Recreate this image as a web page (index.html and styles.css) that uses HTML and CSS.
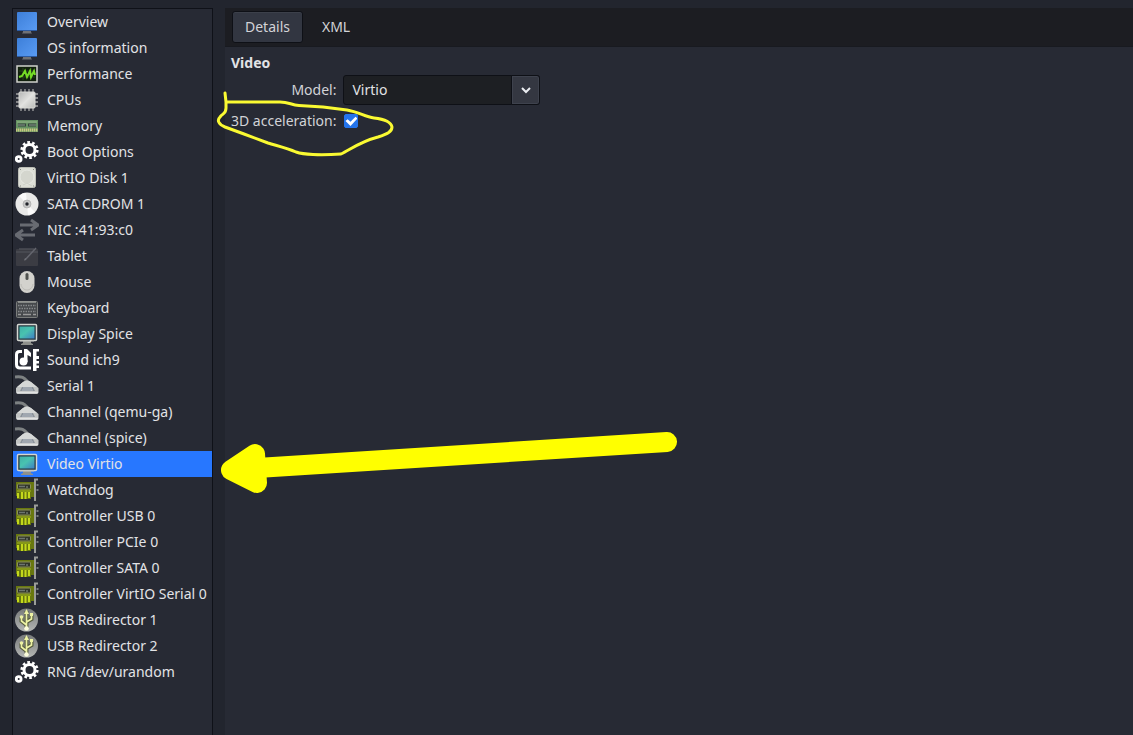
FILE: index.html
```html
<!DOCTYPE html>
<html lang="en">
<head>
    <meta charset="UTF-8">
    <meta name="viewport" content="width=device-width, initial-scale=1.0">
    <title>Virtual Machine Details</title>
    <link rel="stylesheet" href="styles.css">
</head>
<body>

    <!-- Hardware icons -->
    <svg class="sprite" aria-hidden="true">
        <defs>
            <linearGradient id="blue" x1="0" y1="0" x2="1" y2="1">
                <stop offset="0" stop-color="#3d7fd9"/>
                <stop offset="1" stop-color="#5a9cf4"/>
            </linearGradient>
            <linearGradient id="teal" x1="0" y1="0" x2="1" y2="1">
                <stop offset="0" stop-color="#3fb0a8"/>
                <stop offset="0.45" stop-color="#49c3b0"/>
                <stop offset="1" stop-color="#3f7fc4"/>
            </linearGradient>
            <linearGradient id="silver" x1="0" y1="0" x2="1" y2="1">
                <stop offset="0" stop-color="#b4b5b4"/>
                <stop offset="0.5" stop-color="#e2e2e0"/>
                <stop offset="1" stop-color="#b9bab8"/>
            </linearGradient>
            <linearGradient id="ball" x1="0" y1="0" x2="0" y2="1">
                <stop offset="0" stop-color="#777a7a"/>
                <stop offset="1" stop-color="#b4b6b4"/>
            </linearGradient>
        </defs>
        <symbol id="computer" viewBox="0 0 24 24">
            <path d="M8 20h8v2l1 1.500H7l1-1.500z" fill="#6f7176"/>
            <rect x="2" y="2" width="20" height="19" rx="1" fill="url(#blue)"/>
            <path d="M2 20.500h20" stroke="#2c5aa0"/>
        </symbol>
        <symbol id="performance" viewBox="0 0 24 24">
            <rect x="2" y="4" width="20" height="16" fill="#11200d" stroke="#d0d1cc" stroke-width="1.5"/>
            <path d="M4 9h16M4 15h16M8 6v12M16 6v12" stroke="#28451d" stroke-width="1"/>
            <path d="M4 15l3-1 3-5 2 6 3-6 1 6 3-6 1 4" fill="none" stroke="#75dc25" stroke-width="2"/>
        </symbol>
        <symbol id="cpu" viewBox="0 0 24 24">
            <path d="M6 1v22M10 1v22M14 1v22M18 1v22M1 6h22M1 10h22M1 14h22M1 18h22" stroke="#a2a3a2" stroke-width="1.3"/>
            <rect x="4" y="4" width="16" height="16" rx="1" fill="url(#silver)" stroke="#d8d8d5"/>
        </symbol>
        <symbol id="memory" viewBox="0 0 24 24">
            <rect x="1" y="6" width="22" height="12" fill="#669263"/>
            <path d="M2 8h20" stroke="#98b98d"/>
            <path d="M3 11h8M13 11h8" stroke="#34443d" stroke-width="3"/>
            <path d="M3 11h7M14 11h7" stroke="#8a9b8d" stroke-width="1"/>
            <path d="M1 16h22" stroke="#c7c780" stroke-width="3" stroke-dasharray="1.4 .6"/>
        </symbol>
        <symbol id="gears" viewBox="0 0 24 24">
            <circle cx="14.500" cy="10" r="5.500" fill="none" stroke="#fff" stroke-width="3"/>
            <circle cx="14.500" cy="10" r="7.600" fill="none" stroke="#fff" stroke-width="3" stroke-dasharray="2.600 2.175"/>
            <circle cx="3.700" cy="19" r="2.400" fill="none" stroke="#fff" stroke-width="2.800"/>
        </symbol>
        <symbol id="disk" viewBox="0 0 24 24">
            <rect x="3.500" y="1.500" width="17" height="20" rx="2" fill="#dcded6" stroke="#bcbeb6"/>
            <circle cx="12" cy="11" r="7" fill="#d4d6ce" stroke="#e6e8e2"/>
            <path d="M8 19l4-2 5 3" fill="none" stroke="#cdd0c7"/>
            <path d="M5 3.500h1M18 3.500h1M5 20h1M18 20h1" stroke="#888b84"/>
        </symbol>
        <symbol id="cdrom" viewBox="0 0 24 24">
            <circle cx="12" cy="12" r="11.500" fill="#e9e9e8"/>
            <path d="M12 12L4 4a11 11 0 0 1 7-3zM12 12l8 8a11 11 0 0 1-7 3z" fill="#fafafa"/>
            <circle cx="12" cy="12" r="4" fill="#c6c7c7" stroke="#a2a3a3" stroke-width=".6"/>
            <circle cx="12" cy="12" r="1.700" fill="#202229"/>
        </symbol>
        <symbol id="nic" viewBox="0 0 24 24">
            <path d="M5 7h17M16 2l7 5-7 5M20 17H2M8 12l-7 5 7 5" fill="none" stroke="#686b72" stroke-width="3"/>
        </symbol>
        <symbol id="tablet" viewBox="0 0 24 24">
            <rect x="1" y="5" width="22" height="17" rx="1" fill="#3b3c43"/>
            <path d="M1 8h22M4 5h15" stroke="#4c4e56" stroke-width="1.500"/>
            <path d="M10 16L21 4" stroke="#64666e" stroke-width="1.500"/>
            <path d="M9 17l1-3 1 1z" fill="#77787e"/>
        </symbol>
        <symbol id="mouse" viewBox="0 0 24 24">
            <rect x="4.500" y="1" width="15" height="22" rx="7.500" fill="#d3d2cd"/>
            <path d="M6 14c1 8 11 8 12 0" fill="none" stroke="#bdbcb7"/>
            <rect x="10.500" y="3" width="3" height="7" rx="1.500" fill="#50524f"/>
        </symbol>
        <symbol id="keyboard" viewBox="0 0 24 24">
            <rect x="1.500" y="5.500" width="21" height="16" rx="1" fill="#46494c" stroke="#7b7d7c"/>
            <path d="M3 6h18" stroke="#9a9c99" stroke-width="1.500"/>
            <path d="M3 9.500h18M4 12.500h17M3 15.500h18" stroke="#85888a" stroke-width="1.500" stroke-dasharray="1.500 1"/>
            <path d="M3 18.500h3M8 18.500h8M18 18.500h3" stroke="#999" stroke-width="1.500"/>
        </symbol>
        <symbol id="display" viewBox="0 0 24 24">
            <path d="M8 19h8v2l2 1v1H6v-1l2-1z" fill="#8e908c"/>
            <rect x="2.500" y="2.500" width="19" height="16" rx="1" fill="#24373f" stroke="#d4d6d1" stroke-width="1.500"/>
            <rect x="4.500" y="4.500" width="15" height="12" fill="url(#teal)"/>
            <path d="M5 19h14" stroke="#b8bab5"/>
        </symbol>
        <symbol id="sound" viewBox="0 0 24 24">
            <path d="M7 3.500H4.500Q1.500 3.500 1.500 6.500v10q0 3.500 3.500 3.500H16" fill="none" stroke="#fff" stroke-width="3"/>
            <circle cx="8.500" cy="13.500" r="4" fill="#fff"/>
            <path d="M9 1h3l4 4v4l-3.500-2v7H9z" fill="#fff"/>
            <path d="M18 1h6v2.500h-2.500V23H18zM21 8h3v3h-3zM21 13h3v2.500h-3zM21 17.500h3v2.500h-3z" fill="#fff"/>
        </symbol>
        <symbol id="serial" viewBox="0 0 24 24">
            <path d="M0 3c8-1 9 1 14 6" fill="none" stroke="#7d8182" stroke-width="3"/>
            <path d="M8 8q4-3 8 0l7.500 6v4q0 2-3 2H4q-3 0-3-2v-4z" fill="#c2c4c3"/>
            <path d="M8 8q4-3 8 0l6 5H2z" fill="#d6d8d7"/>
            <path d="M7 13h11l2 4H5z" fill="#8b929b"/>
            <path d="M8 14h9M7 16h11" stroke="#b5bcc5" stroke-width="1"/>
            <path d="M2 18.500h21" stroke="#e0e2e2" stroke-width="1.500"/>
        </symbol>
        <symbol id="card" viewBox="0 0 24 24">
            <path d="M1 4h18v15h-3v2H2v-3H1z" fill="#68770f"/>
            <path d="M3 15v5M7 14v7M10.500 14v7M14 14v6" stroke="#c3d81c" stroke-width="2"/>
            <path d="M2 13h14" stroke="#90a31d" stroke-width="1.500"/>
            <rect x="2.500" y="6" width="13" height="5" rx="1" fill="#303529" stroke="#8b905c"/>
            <path d="M4 8.500h6M12 8v2" stroke="#6d756f" stroke-width="1.500"/>
            <path d="M23 1.500h-3V23" fill="none" stroke="#9b9d99" stroke-width="2"/>
            <path d="M22.500 6v2M22.500 11v2" stroke="#777b7c" stroke-width="2"/>
        </symbol>
        <symbol id="usb" viewBox="0 0 24 24">
            <circle cx="11.500" cy="12" r="11.500" fill="url(#ball)"/>
            <path d="M11.500 3v17M11.500 17l-5-4V9M11.500 14l5-3V7" stroke="#555b3e" stroke-width="4" fill="none"/>
            <path d="M11.500 4v16M11.500 17l-5-4V9M11.500 14l5-3V7" fill="none" stroke="#edf2a4" stroke-width="1.700"/>
            <path d="M9 6l2.500-5L14 6z" fill="#edf2a4"/>
            <circle cx="6.500" cy="9" r="1.800" fill="#edf2a4"/>
            <rect x="15" y="5" width="3" height="3" fill="#edf2a4"/>
            <circle cx="11.500" cy="20.500" r="2.300" fill="#fafbdc"/>
        </symbol>
    </svg>

    <div class="window">
        <nav class="hardware" id="hardware" aria-label="Hardware"></nav>

        <main class="details">
            <div class="tabs">
                <button type="button" class="tab active">Details</button>
                <button type="button" class="tab">XML</button>
            </div>
            <form class="panel">
                <h2>Video</h2>
                <div class="fields">
                    <label for="model">Model:</label>
                    <div class="combo">
                        <select id="model">
                            <option>Virtio</option>
                            <option>QXL</option>
                            <option>VGA</option>
                        </select>
                        <span class="combo-arrow">
                            <svg width="12" height="8" viewBox="0 0 12 8"><path d="M2 2l4 4 4-4" fill="none" stroke="#eceef2" stroke-width="2"/></svg>
                        </span>
                    </div>
                    <label for="accel">3D acceleration:</label>
                    <input type="checkbox" id="accel" checked>
                </div>
            </form>
        </main>
    </div>

    <!-- Hand-drawn marks over the window -->
    <svg class="marks" width="700" height="520" viewBox="0 0 700 520" aria-hidden="true">
        <path class="loop" d="M225 93L226 102H280C289 102 291 105 299 105.500L323 107L347 110C359 112 365 117 374 118C383 119 391 122 392 127C392 132 387 134 378 137C359 142 350 150 341 154Q326 155 313 154.500Q302 154 296 152C287 148 278 146 268 143L244 134L225 127C218 124 217 120 220 117C223 113 226 114 226 108V101"/>
        <path class="shaft" d="M257 468L667 442"/>
        <path class="head" d="M231 470L255 454L257 483Z"/>
    </svg>

    <script>
        const devices = [
            ['computer', 'Overview'],
            ['computer', 'OS information'],
            ['performance', 'Performance'],
            ['cpu', 'CPUs'],
            ['memory', 'Memory'],
            ['gears', 'Boot Options'],
            ['disk', 'VirtIO Disk 1'],
            ['cdrom', 'SATA CDROM 1'],
            ['nic', 'NIC :41:93:c0'],
            ['tablet', 'Tablet'],
            ['mouse', 'Mouse'],
            ['keyboard', 'Keyboard'],
            ['display', 'Display Spice'],
            ['sound', 'Sound ich9'],
            ['serial', 'Serial 1'],
            ['serial', 'Channel (qemu-ga)'],
            ['serial', 'Channel (spice)'],
            ['display', 'Video Virtio'],
            ['card', 'Watchdog'],
            ['card', 'Controller USB 0'],
            ['card', 'Controller PCIe 0'],
            ['card', 'Controller SATA 0'],
            ['card', 'Controller VirtIO Serial 0'],
            ['usb', 'USB Redirector 1'],
            ['usb', 'USB Redirector 2'],
            ['gears', 'RNG /dev/urandom']
        ];

        const list = document.getElementById('hardware');
        devices.forEach(([icon, name]) => {
            const item = document.createElement('button');
            item.type = 'button';
            item.className = name === 'Video Virtio' ? 'device selected' : 'device';
            item.innerHTML = `<svg class="icon"><use href="#${icon}"/></svg><span>${name}</span>`;
            list.appendChild(item);
        });

        // Select the clicked device
        list.addEventListener('click', function (event) {
            const item = event.target.closest('.device');
            if (!item) return;
            list.querySelector('.selected').classList.remove('selected');
            item.classList.add('selected');
        });
    </script>

</body>
</html>
```
FILE: styles.css
```css
* {
    box-sizing: border-box;
}
body {
    margin: 0;
    background-color: #22252e;
    color: #e2e3e6;
    font-family: "Noto Sans", sans-serif;
    font-size: 14px;
    line-height: 20px;
}
button, select {
    font: inherit;
    color: inherit;
}
.sprite {
    position: absolute;
    width: 0;
    height: 0;
}
.window {
    display: flex;
    gap: 12px;
    min-height: 100vh;
    padding: 8px 0 0 12px;
}
.hardware {
    display: flex;
    flex-direction: column;
    flex-shrink: 0;
    width: 201px;
    border: 1px solid #0f1118;
    border-bottom: none;
    background-color: #272a34;
}
.device {
    display: flex;
    align-items: center;
    gap: 8px;
    height: 26px;
    padding: 0 2px;
    border: none;
    background: none;
    white-space: nowrap;
    text-align: left;
}
.device.selected {
    background-color: #2777ff;
}
.icon {
    flex-shrink: 0;
    width: 24px;
    height: 24px;
}
.details {
    flex: 1;
    background-color: #272a34;
}
.tabs {
    display: flex;
    gap: 6px;
    padding: 3px 7px;
    background-color: #1c1d22;
    border-bottom: 1px solid #181a20;
    color: #d2d3d7;
}
.tab {
    height: 32px;
    padding: 0 12px;
    border: 1px solid transparent;
    border-radius: 3px;
    background: none;
}
.tab.active {
    background-color: #323641;
    border-color: #0e1016;
    box-shadow: inset 0 1px #3c404a;
}
.panel {
    padding: 6px;
}
h2 {
    margin: 0 0 2px;
    font-size: 14px;
    line-height: 20px;
}
.fields {
    display: grid;
    grid-template-columns: max-content max-content;
    align-items: center;
    gap: 6px 7px;
}
.fields label {
    color: #d2d3d7;
    text-align: right;
}
.combo {
    position: relative;
    width: 197px;
}
.combo select {
    appearance: none;
    display: block;
    width: 100%;
    height: 30px;
    padding: 0 32px 0 8px;
    border: 1px solid #0e1016;
    border-radius: 3px;
    background-color: #1d1f23;
}
.combo-arrow {
    position: absolute;
    top: 0;
    right: 0;
    display: flex;
    align-items: center;
    justify-content: center;
    width: 29px;
    height: 30px;
    border: 1px solid #0e1016;
    border-radius: 0 3px 3px 0;
    background-color: #343741;
    box-shadow: inset 0 0 0 1px #3e424d;
    pointer-events: none;
}
input[type="checkbox"] {
    appearance: none;
    display: grid;
    place-items: center;
    width: 14px;
    height: 14px;
    margin: 0 1px;
    border: 1px solid #0e1016;
    border-radius: 2px;
    background-color: #1d1f23;
}
input[type="checkbox"]:checked {
    border-color: #2474eb;
    background-color: #2474eb;
}
input[type="checkbox"]:checked::before {
    content: "";
    width: 12px;
    height: 10px;
    background-color: #ffffff;
    clip-path: polygon(0 50%, 18% 32%, 42% 58%, 84% 8%, 100% 26%, 42% 100%);
}
.marks {
    position: absolute;
    top: 0;
    left: 0;
    pointer-events: none;
    fill: none;
    stroke: #ffff00;
    stroke-linecap: round;
    stroke-linejoin: round;
}
.loop {
    stroke: #fafa32;
    stroke-width: 3;
}
.shaft {
    stroke-width: 20;
}
.head {
    fill: #ffff00;
    stroke-width: 20;
}
```
